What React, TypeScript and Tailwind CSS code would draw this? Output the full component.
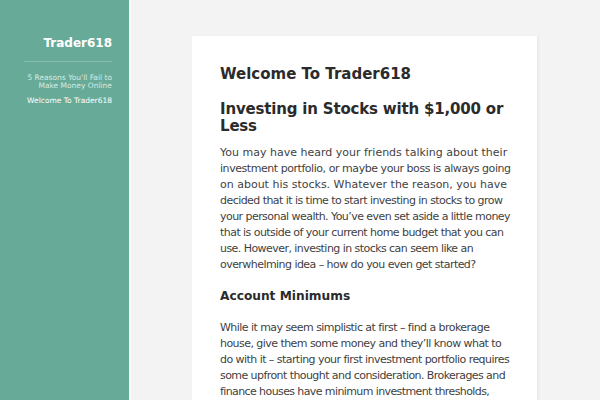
const intro = [
  ["You may have heard your friends talking about their", ""],
  ["investment portfolio, or maybe your boss is always going", "tracking-[-0.45px]"],
  ["on about his stocks. Whatever the reason, you have", ""],
  ["decided that it is time to start investing in stocks to grow", "tracking-[-0.55px]"],
  ["your personal wealth. You’ve even set aside a little money", "tracking-[-0.55px]"],
  ["that is outside of your current home budget that you can", "tracking-[-0.55px]"],
  ["use. However, investing in stocks can seem like an", "tracking-[-0.55px]"],
  ["overwhelming idea – how do you even get started?", "tracking-[-0.55px]"],
];

const minimums = [
  ["While it may seem simplistic at first – find a brokerage", "tracking-[-0.55px]"],
  ["house, give them some money and they’ll know what to", "tracking-[-0.55px]"],
  ["do with it – starting your first investment portfolio requires", "tracking-[-0.55px]"],
  ["some upfront thought and consideration. Brokerages and", "tracking-[-0.57px]"],
  ["finance houses have minimum investment thresholds,", "tracking-[-0.6px]"],
  ["and you need to be sure that you can meet those", "tracking-[-0.55px]"],
  ["requirements.", "tracking-[-0.55px]"],
];

function Lines({ lines }: { lines: string[][] }) {
  return (
    <>
      {lines.map(([text, cls]) => (
        <span key={text} className={`block whitespace-nowrap ${cls}`}>
          {text}
        </span>
      ))}
    </>
  );
}

export default function App() {
  return (
    <div className="flex h-[400px] w-[600px] overflow-hidden bg-[#f3f3f3] font-['DejaVu_Sans',sans-serif]">
      <aside className="w-[131px] shrink-0 border-r-2 border-[#f8f8f8] bg-[#68aa98] px-[17px] pt-[35px] text-right">
        <h1 className="text-[12px] font-bold leading-4 text-white">Trader618</h1>
        <div className="mt-[10px] ml-[7px] h-px bg-[#88bcad]" />
        <nav className="mt-[12px] flex flex-col gap-[7px] text-[7.5px] leading-[8px]">
          <a className="text-[#d4ebe3]">
            5 Reasons You'll Fail to Make Money Online
          </a>
          <a className="text-white">Welcome To Trader618</a>
        </nav>
      </aside>
      <main className="flex-1 pl-[61px] pt-[36px]">
        <article className="w-[345px] bg-white px-[28px] pt-[28px] text-[#3f3f3f] shadow-[2px_0_2px_rgba(0,0,0,0.04)]">
          <h1 className="text-[15px] font-bold leading-5 text-[#2b2b2b]">
            Welcome To Trader618
          </h1>
          <h2 className="mt-[17px] whitespace-nowrap text-[15px] font-bold leading-[17px] tracking-[-0.18px] text-[#2b2b2b]">
            Investing in Stocks with $1,000 or
            <br />
            Less
          </h2>
          <p className="mt-[10px] text-[11px] leading-4">
            <Lines lines={intro} />
          </p>
          <h3 className="mt-[15px] text-[12.2px] font-bold leading-4 text-[#2b2b2b]">
            Account Minimums
          </h3>
          <p className="mt-[16px] text-[11px] leading-4">
            <Lines lines={minimums} />
          </p>
        </article>
      </main>
    </div>
  );
}
